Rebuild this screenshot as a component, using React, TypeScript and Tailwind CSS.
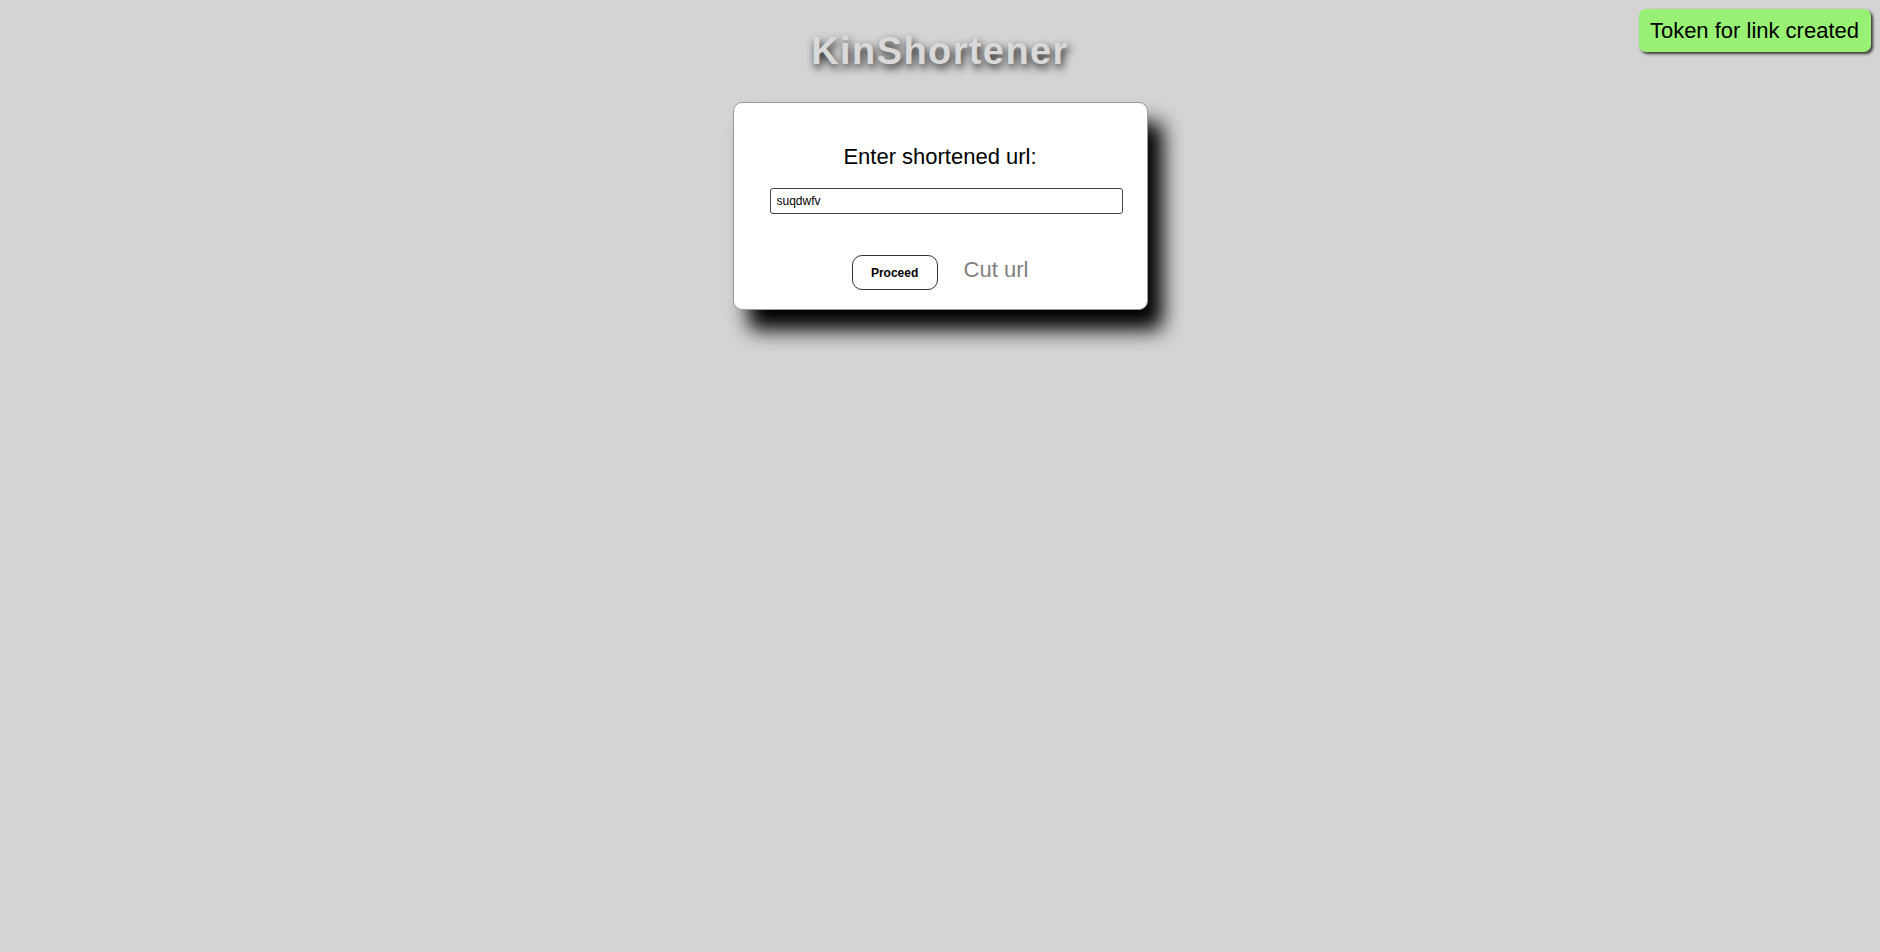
import React from 'react'

const App = () => {
  return (
    <div className="min-h-screen w-full bg-[#d4d4d4] relative flex flex-col items-center font-['Liberation_Sans',Arial,sans-serif]">
      {/* Toast in the corner */}
      <div className="absolute top-[9px] right-[9px] h-[43px] pl-[11px] pr-[12px] flex items-center rounded-[7px] bg-[#98f175] text-black text-[22px] shadow-[2px_2px_3px_#333]">
        Token for link created
      </div>

      <h1 className="mt-[29px] text-[38px] leading-[44px] font-bold tracking-[1.4px] text-[#d9d9d9] [text-shadow:2px_4px_8px_rgba(0,0,0,0.9)]">
        KinShortener
      </h1>

      <div className="mt-[29px] w-[415px] h-[208px] bg-white border border-[#9a9a9a] rounded-[9px] shadow-[15px_20px_20px_#000] flex flex-col pt-[41px]">
        <h2 className="text-center text-[22px] leading-[25px] text-black">Enter shortened url:</h2>
        <input
          defaultValue="suqdwfv"
          className="mt-[19px] ml-[36px] w-[353px] h-[26px] px-[6px] text-[12px] text-black border border-[#444] rounded-[3px] outline-none"
        />
        <div className="mt-[41px] flex items-baseline justify-center gap-[26px]">
          <button className="w-[86px] h-[35px] border border-[#333] rounded-[10px] bg-white text-[12px] font-bold text-black">
            Proceed
          </button>
          <a className="text-[22px] leading-[25px] text-[#808080] cursor-pointer">Cut url</a>
        </div>
      </div>
    </div>
  )
}

export default App
